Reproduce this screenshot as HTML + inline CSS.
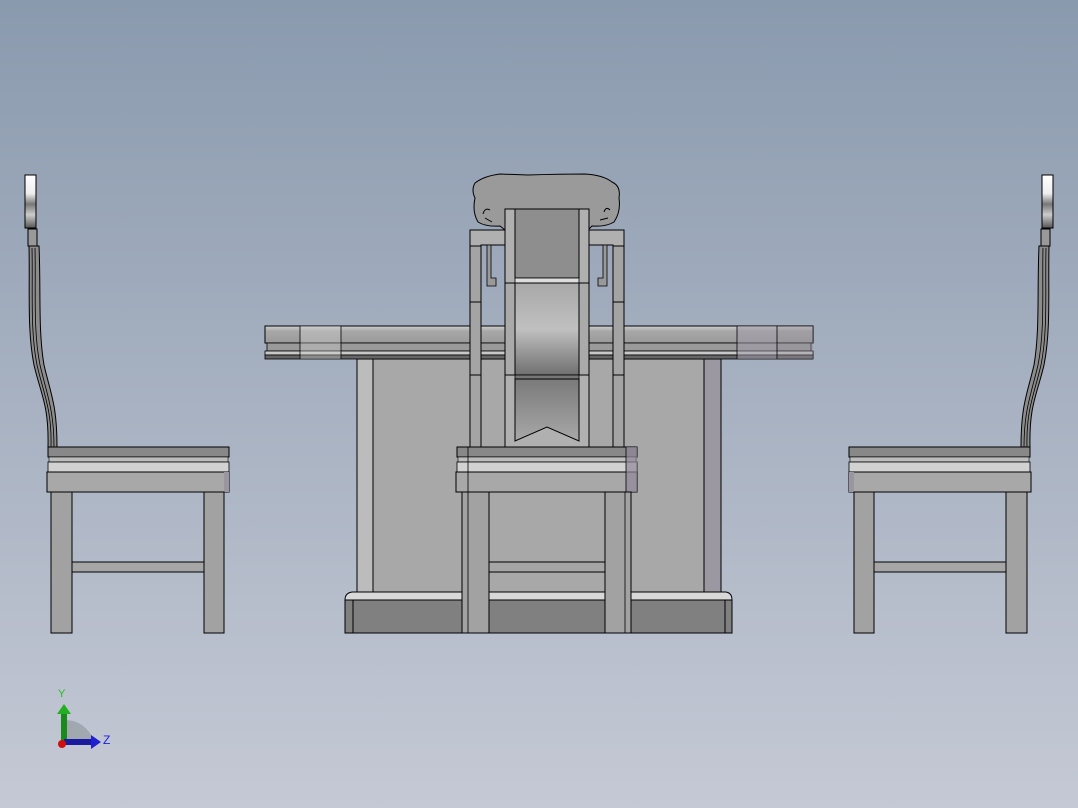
<!DOCTYPE html>
<html><head><meta charset="utf-8"><style>
html,body{margin:0;padding:0;width:1078px;height:808px;overflow:hidden}
svg{display:block}
</style></head><body>
<svg width="1078" height="808" viewBox="0 0 1078 808" xmlns="http://www.w3.org/2000/svg" font-family="Liberation Sans, sans-serif">
<defs>
<linearGradient id="bg" x1="0" y1="0" x2="0" y2="1">
<stop offset="0" stop-color="#8a9aae"/><stop offset="1" stop-color="#c5c9d5"/>
</linearGradient>
<linearGradient id="mid" x1="0" y1="0" x2="0" y2="1">
<stop offset="0" stop-color="#a8a8a8"/><stop offset="0.5" stop-color="#c0c0c0"/><stop offset="1" stop-color="#707070"/>
</linearGradient>
<linearGradient id="low" x1="0" y1="0" x2="0" y2="1">
<stop offset="0" stop-color="#7a7a7a"/><stop offset="1" stop-color="#a8a8a8"/>
</linearGradient>
<linearGradient id="disk" x1="0" y1="0" x2="0" y2="1">
<stop offset="0" stop-color="#ffffff"/><stop offset="0.35" stop-color="#eeeeee"/><stop offset="0.55" stop-color="#777"/><stop offset="0.75" stop-color="#ccc"/><stop offset="1" stop-color="#555"/>
</linearGradient>
<linearGradient id="top" x1="0" y1="0" x2="0" y2="1">
<stop offset="0" stop-color="#d0d0d0"/><stop offset="0.3" stop-color="#a8a8a8"/><stop offset="1" stop-color="#9a9a9a"/>
</linearGradient>
<g id="side">
 <rect x="25" y="175" width="11" height="53" fill="url(#disk)" stroke="#000" stroke-width="1"/>
 <rect x="28" y="229" width="9" height="17" fill="#999" stroke="#000" stroke-width="1"/>
 <path d="M29 246 C30 290 27 330 34 365 C41 395 49 405 48 447 L57 447 C57 405 51 395 44 365 C38 330 41 290 39 246 Z" fill="#8c8c8c" stroke="#000" stroke-width="1"/>
 <path d="M32 248 C33 290 30 330 37 365 C44 395 52 410 51 447 M35 248 C36 290 33 330 40 365 C47 395 54 410 54 447" fill="none" stroke="#000" stroke-width="0.8"/>
 <rect x="48" y="447" width="181" height="10" fill="#888" stroke="#000"/>
 <rect x="49" y="457" width="179" height="5" fill="#bdbdbd" stroke="#000" stroke-width="0.6"/>
 <rect x="48" y="462" width="181" height="10" fill="#d2d2d2" stroke="#000" stroke-width="0.8"/>
 <rect x="47" y="472" width="182" height="20" fill="#a8a8a8" stroke="#000"/>
 <rect x="224" y="472" width="5" height="20" fill="#9a96a0"/>
 <rect x="51" y="492" width="21" height="141" fill="#a2a2a2" stroke="#000"/>
 <rect x="204" y="492" width="20" height="141" fill="#a2a2a2" stroke="#000"/>
 <rect x="72" y="562" width="132" height="10" fill="#a6a6a6" stroke="#000"/>
</g>
</defs>
<rect width="1078" height="808" fill="url(#bg)"/>

<rect x="357" y="359" width="364" height="234" fill="#a8a8a8" stroke="#000"/>
<rect x="357" y="359" width="16" height="234" fill="#bcbcbc" stroke="#000"/>
<rect x="704" y="359" width="17" height="234" fill="#9c98a2" stroke="#000"/>
<path d="M345 600 Q345 593 352 592 L726 592 Q732 593 732 600 Z" fill="#d8d8d8" stroke="#000"/>
<rect x="345" y="600" width="387" height="33" fill="#808080" stroke="#000"/>
<line x1="353" y1="600" x2="353" y2="633" stroke="#000"/>
<line x1="725" y1="600" x2="725" y2="633" stroke="#000"/>

<rect x="265" y="326" width="548" height="17" fill="url(#top)" stroke="#000"/>
<rect x="267" y="343" width="544" height="8" fill="#9a9a9a" stroke="#000" stroke-width="0.8"/>
<rect x="265" y="351" width="548" height="4" fill="#c8c8c8" stroke="#000" stroke-width="0.8"/>
<rect x="265" y="355" width="548" height="4" fill="#666" stroke="#000" stroke-width="0.8"/>
<rect x="300" y="326" width="41" height="33" fill="#d0d0d0" opacity="0.35"/>
<rect x="737" y="326" width="40" height="33" fill="#a09aaa" opacity="0.5"/>
<rect x="777" y="326" width="36" height="33" fill="#9890a0" opacity="0.4"/>
<line x1="300" y1="326" x2="300" y2="359" stroke="#000" stroke-width="0.8"/>
<line x1="341" y1="326" x2="341" y2="359" stroke="#000" stroke-width="0.8"/>
<line x1="737" y1="326" x2="737" y2="359" stroke="#000" stroke-width="0.8"/>
<line x1="777" y1="326" x2="777" y2="359" stroke="#000" stroke-width="0.8"/>

<path d="M475 183 Q484 176 500 174 L528 175 Q560 174 585 174 Q603 175 612 182 Q621 186 619 198 Q621 212 614 222 Q606 227 592 226 L588 230 L505 230 L500 226 Q486 227 478 222 Q472 212 475 198 Q471 190 475 183 Z" fill="#9a9a9a" stroke="#000"/>
<path d="M483 214 Q485 207 490 210 M485 218 L492 222 M604 212 Q606 206 610 210 M600 220 L608 218" stroke="#000" fill="none" stroke-width="1"/>
<path d="M470 230 L505 230 L505 245 L481 245 L481 248 L470 248 Z" fill="#b0b0b0" stroke="#000"/>
<path d="M589 230 L624 230 L624 248 L613 248 L613 245 L589 245 Z" fill="#b0b0b0" stroke="#000"/>
<path d="M487 245 L491 245 L491 278 L496 278 L496 286 L487 286 Z" fill="#999" stroke="#000" stroke-width="0.8"/>
<path d="M603 245 L607 245 L607 286 L598 286 L598 278 L603 278 Z" fill="#999" stroke="#000" stroke-width="0.8"/>
<rect x="470" y="246" width="11" height="201" fill="#a4a4a4" stroke="#000"/>
<rect x="613" y="246" width="11" height="201" fill="#a4a4a4" stroke="#000"/>
<line x1="470" y1="302" x2="481" y2="302" stroke="#000"/><line x1="470" y1="375" x2="481" y2="375" stroke="#000"/>
<line x1="613" y1="302" x2="624" y2="302" stroke="#000"/><line x1="613" y1="375" x2="624" y2="375" stroke="#000"/>
<rect x="505" y="209" width="84" height="238" fill="#b0b0b0" stroke="#000"/>
<rect x="515" y="209" width="64" height="69" fill="#8e8e8e" stroke="#000"/>
<rect x="515" y="278" width="64" height="5" fill="#ddd" stroke="#000" stroke-width="0.8"/>
<rect x="505" y="283" width="10" height="92" fill="#aaa" stroke="#000"/>
<rect x="579" y="283" width="10" height="92" fill="#aaa" stroke="#000"/>
<rect x="515" y="283" width="64" height="92" fill="url(#mid)" stroke="#000"/>
<rect x="515" y="375" width="64" height="4" fill="#777" stroke="#000" stroke-width="0.8"/>
<path d="M515 379 L579 379 L579 441 L547 427 L515 441 Z" fill="url(#low)" stroke="#000"/>

<rect x="457" y="447" width="180" height="10" fill="#888" stroke="#000"/>
<rect x="458" y="457" width="178" height="5" fill="#bdbdbd" stroke="#000" stroke-width="0.6"/>
<rect x="457" y="462" width="180" height="10" fill="#d2d2d2" stroke="#000" stroke-width="0.8"/>
<rect x="456" y="472" width="181" height="20" fill="#a8a8a8" stroke="#000"/>
<rect x="626" y="447" width="11" height="45" fill="#8e8898" opacity="0.7"/>
<line x1="468" y1="447" x2="468" y2="492" stroke="#000" stroke-width="0.8"/>
<line x1="626" y1="447" x2="626" y2="492" stroke="#000" stroke-width="0.8"/>
<rect x="462" y="492" width="27" height="141" fill="#a2a2a2" stroke="#000"/>
<line x1="468" y1="492" x2="468" y2="633" stroke="#000" stroke-width="0.8"/>
<rect x="605" y="492" width="26" height="141" fill="#a2a2a2" stroke="#000"/>
<line x1="625" y1="492" x2="625" y2="633" stroke="#000" stroke-width="0.8"/>
<rect x="489" y="562" width="116" height="10" fill="#a6a6a6" stroke="#000"/>

<use href="#side"/>
<use href="#side" transform="translate(1078,0) scale(-1,1)"/>

<path d="M64 742 L64 720 A30 30 0 0 1 94 742 Z" fill="#9aa0a8" opacity="0.8"/>
<rect x="61" y="712" width="6" height="30" fill="#1a8a1a"/>
<path d="M57 714 L64 704 L71 714 Z" fill="#22b022"/>
<rect x="64" y="739" width="28" height="6" fill="#1a1aa0"/>
<path d="M91 735 L101 742 L91 749 Z" fill="#2020d0"/>
<circle cx="62" cy="744" r="4" fill="#d01010"/>
<text x="58" y="697" font-size="11" fill="#20c020">Y</text>
<text x="103" y="744" font-size="12" fill="#2020e0">Z</text>
</svg>
</body></html>
